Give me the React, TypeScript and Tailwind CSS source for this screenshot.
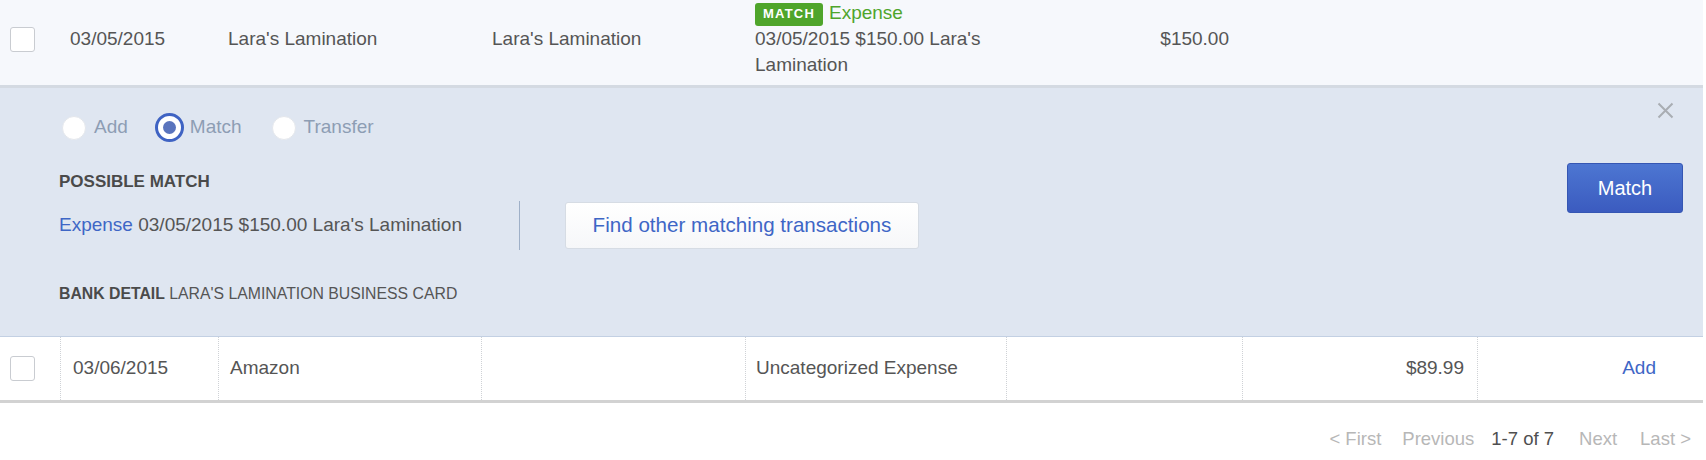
import React from "react";

const font = "font-['Liberation_Sans','Helvetica_Neue',Arial,sans-serif]";

function Checkbox() {
  return <div className="h-[25px] w-[25px] rounded-[3px] border border-[#c9ccd1] bg-white" />;
}

function Radio({ label, checked }: { label: string; checked?: boolean }) {
  return (
    <div className="flex items-center">
      {checked ? (
        <div className="flex h-[29px] w-[29px] items-center justify-center rounded-full border-[3px] border-[#3f63c3] bg-white">
          <div className="h-[13px] w-[13px] rounded-full bg-[#5a74bd]" />
        </div>
      ) : (
        <div className="h-[24px] w-[24px] rounded-full border border-[#e4e7ec] bg-white" />
      )}
      <span className={`text-[19px] text-[#8d9db4] ${checked ? "ml-[6px]" : "ml-[8px]"}`}>{label}</span>
    </div>
  );
}

export default function App() {
  return (
    <div className={`${font} h-[460px] w-[1706px] overflow-hidden bg-white text-[#555]`}>
      <div className="mr-[3px]">
        {/* Matched row */}
        <div className="flex h-[88px] items-center border-b-[3px] border-[#d4dae2] bg-[#f6f8fc] pb-[7px] text-[19px] leading-[26px]">
          <div className="flex w-[60px] pl-[10px]">
            <Checkbox />
          </div>
          <div className="w-[158px] pl-[10px]">03/05/2015</div>
          <div className="w-[263px] pl-[10px]">Lara's Lamination</div>
          <div className="w-[264px] pl-[11px]">Lara's Lamination</div>
          <div className="w-[261px] pl-[10px] pr-[8px]">
            <div className="flex items-center">
              <span className="mt-[2px] inline-flex h-[23px] items-center rounded-[3px] bg-[#4fa52b] px-[8px] text-[13px] font-bold tracking-[1.2px] text-white">
                MATCH
              </span>
              <span className="ml-[6px] text-[#4fa52b]">Expense</span>
            </div>
            <div>03/05/2015 $150.00 Lara's Lamination</div>
          </div>
          <div className="w-[236px] pr-[13px] text-right">$150.00</div>
          <div className="flex-1" />
        </div>

        {/* Expanded match panel */}
        <div className="flex h-[249px] border-b border-[#c3d0e3] bg-[#dfe6f1]">
          <div className="flex-1 pl-[59px] pt-[25px]">
            <div className="ml-[3px] flex items-center gap-[27px]">
              <Radio label="Add" />
              <Radio label="Match" checked />
              <div className="ml-[3px]">
                <Radio label="Transfer" />
              </div>
            </div>
            <div className="mt-[30px] text-[17px] font-bold leading-[20px] text-[#4a4a4a]">POSSIBLE MATCH</div>
            <div className="mt-[9px] flex h-[49px] items-center">
              <div className="w-[460px] text-[19px]">
                <span className="text-[#3e66c6]">Expense</span> 03/05/2015 $150.00 Lara's Lamination
              </div>
              <div className="h-[49px] w-px bg-[#9fb0c8]" />
              <button className="ml-[45px] h-[47px] w-[354px] rounded-[3px] border border-[#d6dce4] bg-gradient-to-b from-white to-[#f6f7f9] text-[20.6px] text-[#3e66c6]">
                Find other matching transactions
              </button>
            </div>
            <div className="mt-[34px] text-[15.8px] leading-[20px] text-[#555]">
              <span className="font-bold text-[#4a4a4a]">BANK DETAIL</span> LARA'S LAMINATION BUSINESS CARD
            </div>
          </div>
          <div className="flex flex-col items-end pr-[20px] pt-[14px]">
            <svg className="mr-[9px] h-[17px] w-[17px]" viewBox="0 0 17 17" fill="none" stroke="#a9adb3" strokeWidth="2">
              <path d="M1.5 1.5 L15.5 15.5 M15.5 1.5 L1.5 15.5" />
            </svg>
            <button className="mt-[44px] h-[50px] w-[116px] rounded-[3px] border border-[#3556b3] bg-gradient-to-b from-[#4d76d2] to-[#3b5bbf] text-[20px] text-white">
              Match
            </button>
          </div>
        </div>

        {/* Plain row */}
        <div className="flex h-[66px] border-b-[3px] border-[#d2d2d2] text-[19px]">
          <div className="flex w-[60px] items-center pl-[10px]">
            <Checkbox />
          </div>
          <div className="flex w-[158px] items-center border-l border-dotted border-[#cfd2d6] pl-[12px]">03/06/2015</div>
          <div className="flex w-[263px] items-center border-l border-dotted border-[#cfd2d6] pl-[11px]">Amazon</div>
          <div className="w-[264px] border-l border-dotted border-[#cfd2d6]" />
          <div className="flex w-[261px] items-center border-l border-dotted border-[#cfd2d6] pl-[10px]">Uncategorized Expense</div>
          <div className="w-[236px] border-l border-dotted border-[#cfd2d6]" />
          <div className="flex w-[235px] items-center justify-end border-l border-dotted border-[#cfd2d6] pr-[13px]">$89.99</div>
          <div className="flex flex-1 items-center justify-end border-l border-dotted border-[#cfd2d6] pr-[47px] text-[#3e66c6]">
            Add
          </div>
        </div>

        {/* Pagination */}
        <div className="flex justify-end pr-[12px] pt-[25px] text-[18.5px] leading-[22px] text-[#b7b7b7]">
          <span>&lt; First</span>
          <span className="ml-[21px]">Previous</span>
          <span className="ml-[17px] text-[#4f4f4f]">1-7 of 7</span>
          <span className="ml-[25px]">Next</span>
          <span className="ml-[23px]">Last &gt;</span>
        </div>
      </div>
    </div>
  );
}
